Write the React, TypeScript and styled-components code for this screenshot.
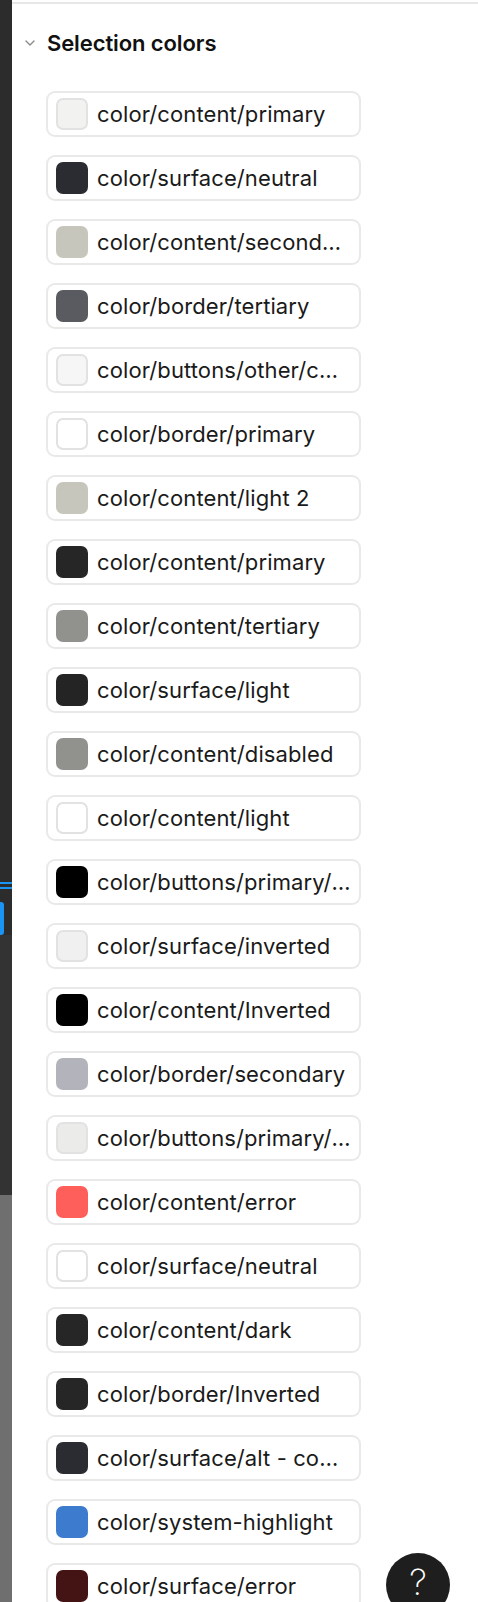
import React from "react";
import styled, { createGlobalStyle } from "styled-components";

const GlobalStyle = createGlobalStyle`
  html, body {
    margin: 0;
    padding: 0;
    background: #ffffff;
  }
  body {
    font-family: Inter, "Noto Sans", "Liberation Sans", sans-serif;
    -webkit-font-smoothing: antialiased;
  }
`;

type Swatch = { name: string; color: string; outlined?: boolean };

const swatches: Swatch[] = [
  { name: "color/content/primary", color: "#f2f2f1", outlined: true },
  { name: "color/surface/neutral", color: "#2b2c31" },
  { name: "color/content/secondary", color: "#c6c6bc" },
  { name: "color/border/tertiary", color: "#5a5b60" },
  { name: "color/buttons/other/content", color: "#f6f6f6", outlined: true },
  { name: "color/border/primary", color: "#ffffff", outlined: true },
  { name: "color/content/light 2", color: "#c6c6bc" },
  { name: "color/content/primary", color: "#262626" },
  { name: "color/content/tertiary", color: "#91918d" },
  { name: "color/surface/light", color: "#242424" },
  { name: "color/content/disabled", color: "#91918d" },
  { name: "color/content/light", color: "#ffffff", outlined: true },
  { name: "color/buttons/primary/surface", color: "#000000" },
  { name: "color/surface/inverted", color: "#f0f0f0", outlined: true },
  { name: "color/content/Inverted", color: "#000000" },
  { name: "color/border/secondary", color: "#b3b3bc" },
  { name: "color/buttons/primary/content", color: "#ebebea", outlined: true },
  { name: "color/content/error", color: "#ff5f5a" },
  { name: "color/surface/neutral", color: "#ffffff", outlined: true },
  { name: "color/content/dark", color: "#262626" },
  { name: "color/border/Inverted", color: "#262626" },
  { name: "color/surface/alt - content", color: "#2b2c31" },
  { name: "color/system-highlight", color: "#3d7bcf" },
  { name: "color/surface/error", color: "#441414" },
];

const Page = styled.div`
  position: relative;
  display: flex;
  height: 1602px;
  overflow: hidden;
`;

const Rail = styled.div`
  width: 12px;
  flex-shrink: 0;
  display: flex;
  flex-direction: column;
`;

const RailPart = styled.div<{ $h?: number; $bg: string; $grow?: boolean }>`
  height: ${(p) => (p.$h ? `${p.$h}px` : "auto")};
  flex: ${(p) => (p.$grow ? 1 : "none")};
  background: ${(p) => p.$bg};
`;

const RailTab = styled.div`
  height: 33px;
  background: #2c2c2c;
  display: flex;

  &::before {
    content: "";
    width: 4px;
    background: #1a95f3;
    border-radius: 0 3px 3px 0;
  }
`;

const Panel = styled.div`
  flex: 1;
  margin-top: 2px;
  border-top: 2px solid #e7e7e7;
  display: flex;
  flex-direction: column;
`;

const Header = styled.div`
  height: 40px;
  margin-top: 26px;
  margin-bottom: 35px;
  padding-left: 13px;
  display: flex;
  align-items: center;
  gap: 12px;
`;

const Title = styled.span`
  font-size: 22px;
  font-weight: 600;
  color: #111111;
  letter-spacing: -0.1px;
`;

const List = styled.div`
  display: flex;
  flex-direction: column;
  gap: 18px;
  padding-left: 34px;
`;

const Row = styled.div`
  box-sizing: border-box;
  width: 315px;
  height: 46px;
  border: 2px solid #e9e9e9;
  border-radius: 9px;
  padding: 0 8px 0 8px;
  display: flex;
  align-items: center;
  gap: 9px;
`;

const Chip = styled.div<{ $color: string; $outlined?: boolean }>`
  box-sizing: border-box;
  width: 32px;
  height: 32px;
  flex-shrink: 0;
  border-radius: 7px;
  background: ${(p) => p.$color};
  border: ${(p) => (p.$outlined ? "2px solid #e2e2e2" : "none")};
`;

const Label = styled.span`
  font-size: 22px;
  letter-spacing: 0.1px;
  color: #1a1a1a;
  white-space: nowrap;
  overflow: hidden;
  text-overflow: ellipsis;
  min-width: 0;
`;

const HelpButton = styled.button`
  position: absolute;
  left: 386px;
  top: 1553px;
  width: 64px;
  height: 64px;
  border-radius: 50%;
  border: none;
  background: #1e1e1e;
  color: #ffffff;
  font-family: Inter, "Noto Sans", sans-serif;
  font-size: 36px;
  font-weight: 200;
  display: flex;
  align-items: center;
  justify-content: center;
  padding: 0 0 6px;
`;

const Chevron = () => (
  <svg width="10" height="6" viewBox="0 0 10 6" fill="none">
    <polyline
      points="1,1 5,5 9,1"
      stroke="#8a8a8a"
      strokeWidth="1.4"
      strokeLinecap="round"
      strokeLinejoin="round"
    />
  </svg>
);

export default function App() {
  return (
    <Page>
      <GlobalStyle />
      <Rail>
        <RailPart $h={882} $bg="#2c2c2c" />
        <RailPart $h={2} $bg="#1a95f3" />
        <RailPart $h={3} $bg="#2c2c2c" />
        <RailPart $h={2} $bg="#1a95f3" />
        <RailPart $h={13} $bg="#2c2c2c" />
        <RailTab />
        <RailPart $h={260} $bg="#333333" />
        <RailPart $grow $bg="#6f6f6f" />
      </Rail>
      <Panel>
        <Header>
          <Chevron />
          <Title>Selection colors</Title>
        </Header>
        <List>
          {swatches.map((s, i) => (
            <Row key={i}>
              <Chip $color={s.color} $outlined={s.outlined} />
              <Label>{s.name}</Label>
            </Row>
          ))}
        </List>
      </Panel>
      <HelpButton>?</HelpButton>
    </Page>
  );
}
